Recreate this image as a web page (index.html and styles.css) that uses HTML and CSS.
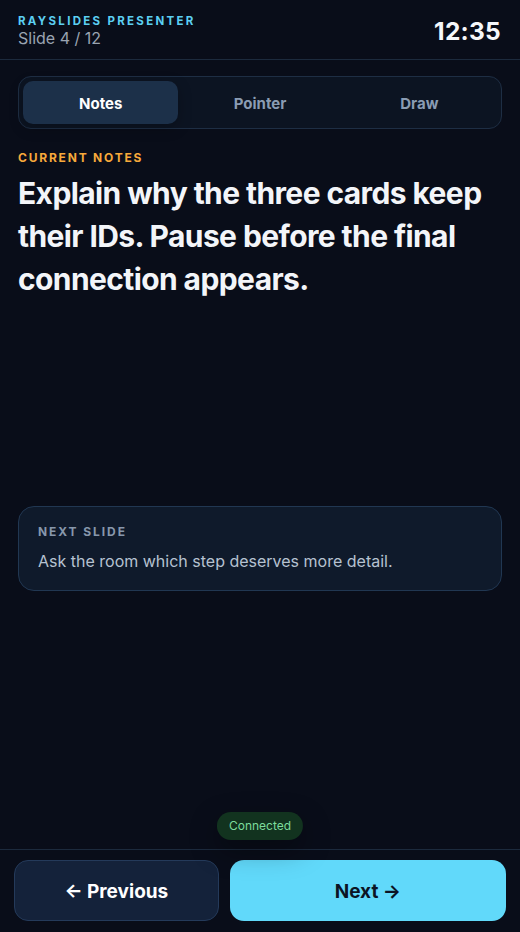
FILE: index.html
```html
<!DOCTYPE html>
<html lang="en">
<head>
<meta charset="utf-8">
<title>RaySlides Presenter</title>
<link rel="stylesheet" href="styles.css">
</head>
<body>
<div class="app">
  <header class="topbar">
    <div class="brand">
      <div class="brand-name">RAYSLIDES PRESENTER</div>
      <div class="slide-count">Slide 4 / 12</div>
    </div>
    <div class="clock">12:35</div>
  </header>
  <main class="content">
    <nav class="tabs">
      <button class="tab active">Notes</button>
      <button class="tab">Pointer</button>
      <button class="tab">Draw</button>
    </nav>
    <section class="notes">
      <div class="notes-label">CURRENT NOTES</div>
      <h1 class="notes-text">Explain why the three cards keep their IDs. Pause before the final connection appears.</h1>
    </section>
    <section class="next-card">
      <div class="next-label">NEXT SLIDE</div>
      <p class="next-text">Ask the room which step deserves more detail.</p>
    </section>
  </main>
  <footer class="controls">
    <div class="status">Connected</div>
    <button class="btn btn-prev">← Previous</button>
    <button class="btn btn-next">Next →</button>
  </footer>
</div>
</body>
</html>
```
FILE: styles.css
```css
* { box-sizing: border-box; }
html, body {
  margin: 0;
  padding: 0;
  background: #090d19;
  font-family: Inter, "Noto Sans", sans-serif;
  color: #f2f4f8;
}
.app {
  height: 932px;
  display: flex;
  flex-direction: column;
}
.topbar {
  height: 60px;
  border-bottom: 1px solid #1c2a3d;
  display: flex;
  align-items: center;
  justify-content: space-between;
  padding: 3px 19px 0 18px;
}
.brand-name {
  font-size: 11.5px;
  font-weight: 700;
  letter-spacing: 0.2em;
  color: #5ccff2;
  line-height: 14px;
}
.slide-count {
  font-size: 16px;
  color: #9aa4b2;
  line-height: 20px;
}
.clock {
  font-size: 24.5px;
  font-weight: 700;
  color: #f5f7fa;
  letter-spacing: 0.01em;
}
.content {
  flex: 1;
  padding: 16px 18px 0;
  display: flex;
  flex-direction: column;
}
.tabs {
  display: grid;
  grid-template-columns: 1fr 1fr 1fr;
  gap: 4px;
  padding: 4px;
  border: 1px solid #1e2e44;
  border-radius: 13px;
  background: #0c1422;
}
.tab {
  height: 43px;
  border: none;
  background: transparent;
  border-radius: 10px;
  font-family: inherit;
  font-size: 15px;
  font-weight: 700;
  color: #8a9cb3;
  padding-top: 2px;
}
.tab.active {
  background: #1c3049;
  color: #ffffff;
  box-shadow: 0 4px 14px rgba(0, 0, 0, 0.25);
}
.notes {
  margin-top: 21px;
  min-height: 356px;
}
.notes-label {
  font-size: 12px;
  font-weight: 700;
  letter-spacing: 0.15em;
  color: #f7a93b;
  line-height: 16px;
}
.notes-text {
  margin: 6px 0 0;
  font-size: 30px;
  line-height: 43px;
  font-weight: 700;
  letter-spacing: -0.02em;
  color: #f3f5f9;
}
.next-card {
  border: 1px solid #213752;
  border-radius: 16px;
  background: #0f1a2b;
  padding: 17px 19px 17px;
}
.next-label {
  font-size: 12px;
  font-weight: 700;
  letter-spacing: 0.16em;
  color: #8797ab;
  line-height: 16px;
}
.next-text {
  margin: 9px 0 0;
  font-size: 16px;
  line-height: 24px;
  color: #b6c2d1;
}
.controls {
  position: relative;
  border-top: 1px solid #1c2a3d;
  padding: 10px 14px 11px;
  display: grid;
  grid-template-columns: 1fr 1.35fr;
  gap: 11px;
}
.status {
  position: absolute;
  left: 50%;
  bottom: calc(100% + 10px);
  transform: translateX(-50%);
  height: 28px;
  padding: 0 12px;
  border-radius: 14px;
  background: #12331f;
  color: #7cdc9c;
  font-size: 12px;
  line-height: 28px;
  box-shadow: 0 10px 28px rgba(0, 0, 0, 0.35);
}
.btn {
  height: 61px;
  border-radius: 14px;
  font-family: inherit;
  font-size: 19px;
  font-weight: 700;
  padding-top: 3px;
}
.btn-prev {
  background: #14223a;
  border: 1px solid #243a5a;
  color: #ffffff;
}
.btn-next {
  background: #61d9fa;
  border: none;
  color: #0b1424;
}
```
